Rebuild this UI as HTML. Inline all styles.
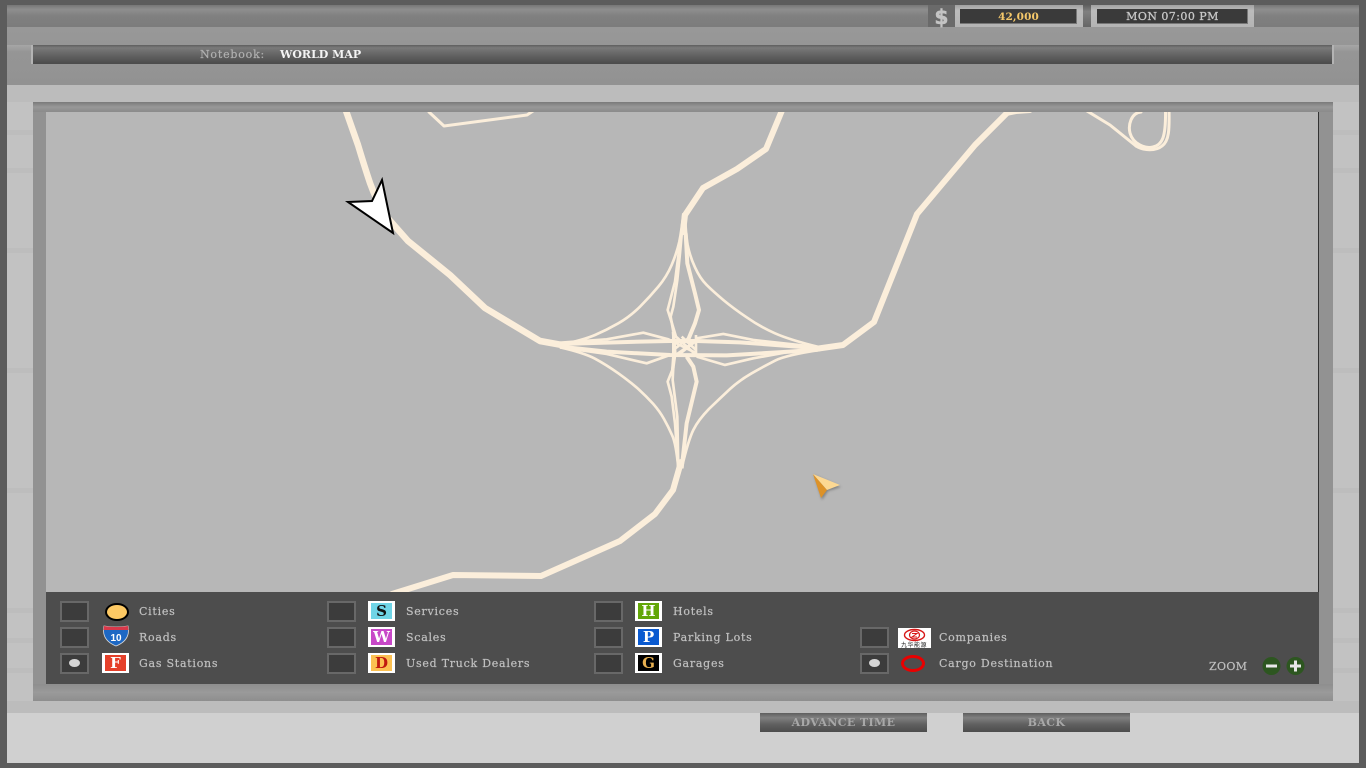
<!DOCTYPE html>
<html><head><meta charset="utf-8"><title>World Map</title>
<style>
html,body{margin:0;padding:0;width:1366px;height:768px;overflow:hidden;background:#5c5c5c}
.a{position:absolute}
.t{position:absolute;font-family:"DejaVu Serif","Liberation Serif",serif;font-size:11px;line-height:14px;color:#c0c0c0;white-space:nowrap;letter-spacing:.75px;-webkit-text-stroke:.2px currentColor}
.cb{position:absolute;width:25px;height:17px;border:2px solid #686868;background:#3c3c3c}
.dot{position:absolute;left:7px;top:4px;width:11px;height:8px;border-radius:50%;background:#d6d6d6}
.ic{position:absolute;width:21px;height:16px;border:solid #fff;border-width:2px 3px;font:bold 15px/16px "DejaVu Serif",serif;text-align:center;overflow:hidden}
.btn{position:absolute;top:713px;width:167px;height:19px;background:linear-gradient(#5e5e5e 0,#808080 25%,#606060 60%,#4c4c4c 100%);font:bold 11px/19px "DejaVu Serif",serif;color:#a8a8a8;text-align:center;letter-spacing:.4px}
.sk{position:absolute;width:26px;height:5px;background:#bdbdbd}
</style></head><body>
<div class="a" style="left:0;top:0;width:1366px;height:768px;overflow:hidden">
<div class="a" style="left:7px;top:5px;width:1352px;height:758px;background:#d0d0d0"></div>
<div class="a" style="left:7px;top:5px;width:1352px;height:22px;background:linear-gradient(#767676 0,#8e8e8e 20%,#808080 50%,#7c7c7c 100%)"></div>
<div class="a" style="left:7px;top:27px;width:1352px;height:58px;background:linear-gradient(#989898,#929292)"></div>
<div class="a" style="left:7px;top:45px;width:25px;height:6px;background:linear-gradient(#a6a6a6,#989898)"></div>
<div class="a" style="left:1334px;top:45px;width:25px;height:6px;background:linear-gradient(#a6a6a6,#989898)"></div>
<div class="a" style="left:7px;top:85px;width:1352px;height:17px;background:#bcbcbc"></div>
<div class="a" style="left:7px;top:102px;width:26px;height:599px;background:#c2c2c2"></div>
<div class="a" style="left:1333px;top:102px;width:26px;height:599px;background:#c2c2c2"></div>
<div class="sk" style="left:7px;top:130px"></div>
<div class="sk" style="left:7px;top:168px"></div>
<div class="sk" style="left:7px;top:248px"></div>
<div class="sk" style="left:7px;top:368px"></div>
<div class="sk" style="left:7px;top:488px"></div>
<div class="sk" style="left:7px;top:608px"></div>
<div class="sk" style="left:7px;top:638px"></div>
<div class="sk" style="left:7px;top:668px"></div>
<div class="sk" style="left:1333px;top:130px"></div>
<div class="sk" style="left:1333px;top:168px"></div>
<div class="sk" style="left:1333px;top:248px"></div>
<div class="sk" style="left:1333px;top:368px"></div>
<div class="sk" style="left:1333px;top:488px"></div>
<div class="sk" style="left:1333px;top:608px"></div>
<div class="sk" style="left:1333px;top:638px"></div>
<div class="sk" style="left:1333px;top:668px"></div>
<div class="a" style="left:7px;top:701px;width:1352px;height:12px;background:#bcbcbc"></div>

<!-- top right -->
<div class="a" style="left:928px;top:5px;width:27px;height:22px;background:#6a6a6a"></div>
<div class="a" style="left:928px;top:5px;width:27px;height:22px;font:bold 20px/24px 'DejaVu Sans',sans-serif;color:#c4c4c4;text-align:center;-webkit-text-stroke:.6px #c4c4c4">$</div>
<div class="a" style="left:955px;top:5px;width:128px;height:22px;background:linear-gradient(#a0a0a0,#bcbcbc 25%,#b4b4b4)"></div>
<div class="a" style="left:1083px;top:5px;width:8px;height:22px;background:linear-gradient(#5e5e5e,#808080 30%,#666)"></div>
<div class="a" style="left:1091px;top:5px;width:163px;height:22px;background:linear-gradient(#a0a0a0,#bcbcbc 25%,#b4b4b4)"></div>
<div class="a" style="left:960px;top:9px;width:116px;height:14px;background:#3a3a3a;border-right:1px solid #777;border-bottom:1px solid #777"></div>
<div class="a" style="left:1097px;top:9px;width:150px;height:14px;background:#3a3a3a;border-right:1px solid #777;border-bottom:1px solid #777"></div>
<div class="t" style="left:960px;top:10px;width:117px;text-align:center;color:#f5c86a;font-weight:bold;font-size:10.5px;letter-spacing:.1px;-webkit-text-stroke:0">42,000</div>
<div class="t" style="left:1097px;top:10px;width:151px;text-align:center;color:#c8c8c8;letter-spacing:.45px;-webkit-text-stroke:.3px #c8c8c8">MON 07:00 PM</div>

<!-- notebook bar -->
<div class="a" style="left:31px;top:45px;width:1299px;height:19px;border-left:2px solid #b4b4b4;border-right:2px solid #b4b4b4;background:linear-gradient(#5e5e5e 0,#7a7a7a 15%,#6a6a6a 40%,#4a4a4a 100%)"></div>
<div class="t" style="left:200px;top:48px;color:#b0b0b0;letter-spacing:.8px">Notebook:</div>
<div class="t" style="left:280px;top:48px;color:#f4f4f4;font-weight:bold;letter-spacing:0;-webkit-text-stroke:0">WORLD MAP</div>

<!-- panel -->
<div class="a" style="left:33px;top:102px;width:1300px;height:599px;background:#929292"></div>
<div class="a" style="left:33px;top:102px;width:1300px;height:10px;background:linear-gradient(#7a7a7a,#989898 50%,#8a8a8a)"></div>
<div class="a" style="left:33px;top:684px;width:1300px;height:17px;background:linear-gradient(#8e8e8e,#9a9a9a 50%,#8e8e8e)"></div>

<!-- map -->
<svg class="a" style="left:46px;top:112px" width="1273" height="480" viewBox="46 112 1273 480" xmlns="http://www.w3.org/2000/svg">
<rect x="46" y="112" width="1273" height="480" fill="#b7b7b7"/>
<rect x="1318" y="112" width="1" height="480" fill="#333"/>
<g fill="none" stroke="#fbeedb" stroke-linejoin="round" stroke-linecap="round">
<path stroke-width="6.500" d="M345,108 L358,145 Q364,165 370,183 Q376,200 385,215 L408,241 L450,275 L485,308 L540,341 L562,345"/>
<path stroke-width="6" d="M783,108 L766,149 L737,169 L703,188 L685,215 L683,232"/>
<path stroke-width="6" d="M681,462 L673,490 L655,514 L620,541 L541,576 L453,575 L392,594"/>
<path stroke-width="6" d="M1012,108 L975,145 L917,214 L874,322 L843,345 L815,349"/>
<polyline stroke-width="3" points="429,112 444,126 527,115 533,111"/>
<polyline stroke-width="4" points="1006,114 1016,112 1030,111"/>
<polyline stroke-width="3" points="1087,111 1110,125 1136,146"/>
<path stroke-width="3" d="M1141,112 C1131,113 1128,125 1130,133 C1133,144 1145,149 1153,147 C1162,145 1166,138 1165.500,110"/>
<path stroke-width="3" d="M1136,146 C1144,151 1156,151 1162,146 C1169,141 1169.500,130 1169,110"/>
<g transform="translate(540 210) scale(.3333)" stroke-linecap="butt">
<g stroke-width="8">
<path d="M60,405 Q130,390 165,375 Q200,360 235,340 Q270,320 300,290 Q330,260 355,230 Q380,200 395,165 Q410,130 418,95 Q425,60 430,10"/>
<path d="M840,412 Q750,390 705,370 Q660,350 620,322 Q580,295 550,270 Q520,245 500,225 Q480,205 465,172 Q450,140 443,105 Q437,70 435,10"/>
<path d="M60,412 Q130,428 165,446 Q200,465 235,490 Q270,515 295,537 Q320,560 340,582 Q360,605 372,627 Q385,650 396,675 Q408,700 415,775"/>
<path d="M840,420 Q740,435 705,452 Q670,470 635,490 Q600,510 570,537 Q540,565 507,597 Q475,630 460,660 Q445,690 425,775"/>
<polyline points="430,20 416,130 405,215 383,300 396,340 408,380 465,432"/>
<polyline points="430,20 420,130 412,210 400,290 392,320 400,365"/>
<polyline points="415,775 405,640 395,560 383,515 397,480 400,440 468,392"/>
<polyline points="415,775 412,620 398,510 400,470"/>
<polyline points="60,398 200,388 310,368 385,388 470,430"/>
<polyline points="60,412 200,432 320,460 390,435"/>
<polyline points="470,385 550,372 640,390 840,412"/>
<polyline points="470,440 555,465 640,445 750,425 840,418"/>
<polyline points="400,375 400,435"/>
<polyline points="468,375 468,435"/>
<polyline points="415,435 465,395"/>
<polyline points="425,380 468,420"/>
<polyline points="400,420 445,385"/>
</g>
<g stroke-width="12">
<polyline points="437,70 442,160 465,250 477,300 465,340 440,400"/>
<polyline points="425,775 440,640 470,515 460,470 440,440"/>
<polyline points="60,402 300,395 390,393 470,393 600,397 840,415"/>
<polyline points="60,410 200,425 390,435 560,436 750,425 840,418"/>
<polyline stroke-width="10" points="400,365 405,430 398,480"/>
</g>
</g>
</g>
<polygon points="382,180 393,233 348,202 372,201" fill="#fff" stroke="#000" stroke-width="2" stroke-linejoin="miter"/>
<defs><filter id="s" x="-40%" y="-40%" width="180%" height="180%"><feGaussianBlur stdDeviation="1.200"/></filter></defs>
<polygon points="814,475 841,487 828,491 822,500" fill="#555" opacity=".55" filter="url(#s)"/>
<polygon points="813,474 827,490 821,498" fill="#dd9228"/>
<polygon points="813,474 840,485 827,490" fill="#fcd893"/>
</svg>

<!-- legend -->
<div class="a" style="left:46px;top:592px;width:1273px;height:92px;background:#4d4d4d"></div>
<div class="cb" style="left:60px;top:601px"></div>
<div class="cb" style="left:60px;top:627px"></div>
<div class="cb" style="left:60px;top:653px"><div class="dot"></div></div>
<div class="cb" style="left:327px;top:601px"></div>
<div class="cb" style="left:327px;top:627px"></div>
<div class="cb" style="left:327px;top:653px"></div>
<div class="cb" style="left:594px;top:601px"></div>
<div class="cb" style="left:594px;top:627px"></div>
<div class="cb" style="left:594px;top:653px"></div>
<div class="cb" style="left:860px;top:627px"></div>
<div class="cb" style="left:860px;top:653px"><div class="dot"></div></div>

<div class="a" style="left:105px;top:603px;width:20px;height:14px;border:2px solid #000;border-radius:50%;background:#fdc964"></div>
<svg class="a" style="left:102px;top:625px" width="28" height="22" viewBox="0 0 28 22" xmlns="http://www.w3.org/2000/svg">
<path d="M2,1 Q14,3 26,1 Q29,15 14,21 Q-1,15 2,1Z" fill="#1d68c4" stroke="#d8d8d8" stroke-width=".8"/>
<path d="M2,1 Q14,3 26,1 L26.500,5 L1.500,5Z" fill="#d8384a"/>
<text x="14" y="16" text-anchor="middle" font-family="Liberation Sans,sans-serif" font-weight="bold" font-size="10" fill="#fff">10</text>
</svg>
<div class="ic" style="left:102px;top:653px;background:#e5402a;color:#fff">F</div>
<div class="ic" style="left:368px;top:601px;background:#6fd4e6;color:#111">S</div>
<div class="ic" style="left:368px;top:627px;background:#c848c8;color:#fff">W</div>
<div class="ic" style="left:368px;top:653px;background:#fcc152;color:#c01a10">D</div>
<div class="ic" style="left:635px;top:601px;background:#62a608;color:#fff">H</div>
<div class="ic" style="left:635px;top:627px;background:#0a5ad0;color:#fff">P</div>
<div class="ic" style="left:635px;top:653px;background:#000;color:#e8b050">G</div>

<div class="a" style="left:898px;top:628px;width:33px;height:20px;background:#fff;overflow:hidden">
<svg class="a" style="left:4px;top:0" width="25" height="14" viewBox="0 0 25 14" xmlns="http://www.w3.org/2000/svg"><ellipse cx="12.500" cy="7" rx="10" ry="5.500" fill="none" stroke="#d81818" stroke-width="1.400"/><ellipse cx="12.500" cy="7" rx="5" ry="4" fill="none" stroke="#d81818" stroke-width="1.200"/><path d="M10,5.500H15L10,9H15" fill="none" stroke="#d81818"/></svg>
<div class="a" style="left:3px;top:13px;width:30px;font:6px/7px 'Noto Sans CJK SC',sans-serif;color:#222;white-space:nowrap;letter-spacing:.5px">九华能源</div>
</div>
<div class="a" style="left:901px;top:655px;width:18px;height:11px;border:3.500px solid #e80000;border-radius:50%"></div>

<div class="t" style="left:139px;top:605px">Cities</div>
<div class="t" style="left:139px;top:631px">Roads</div>
<div class="t" style="left:139px;top:657px">Gas Stations</div>
<div class="t" style="left:406px;top:605px">Services</div>
<div class="t" style="left:406px;top:631px">Scales</div>
<div class="t" style="left:406px;top:657px">Used Truck Dealers</div>
<div class="t" style="left:673px;top:605px">Hotels</div>
<div class="t" style="left:673px;top:631px">Parking Lots</div>
<div class="t" style="left:673px;top:657px">Garages</div>
<div class="t" style="left:939px;top:631px">Companies</div>
<div class="t" style="left:939px;top:657px">Cargo Destination</div>
<div class="t" style="left:1209px;top:660px;letter-spacing:.35px">ZOOM</div>
<svg class="a" style="left:1260px;top:655px" width="46" height="22" viewBox="0 0 46 22" xmlns="http://www.w3.org/2000/svg">
<circle cx="11.500" cy="11" r="9" fill="#2d5620"/><circle cx="35.500" cy="11" r="9" fill="#2d5620"/>
<rect x="6" y="9.500" width="11" height="3" fill="#e8e8e8"/>
<rect x="30" y="9.500" width="11" height="3" fill="#e8e8e8"/><rect x="34" y="5.500" width="3" height="11" fill="#e8e8e8"/>
</svg>

<div class="btn" style="left:760px">ADVANCE TIME</div>
<div class="btn" style="left:963px">BACK</div>
</div>
</body></html>
